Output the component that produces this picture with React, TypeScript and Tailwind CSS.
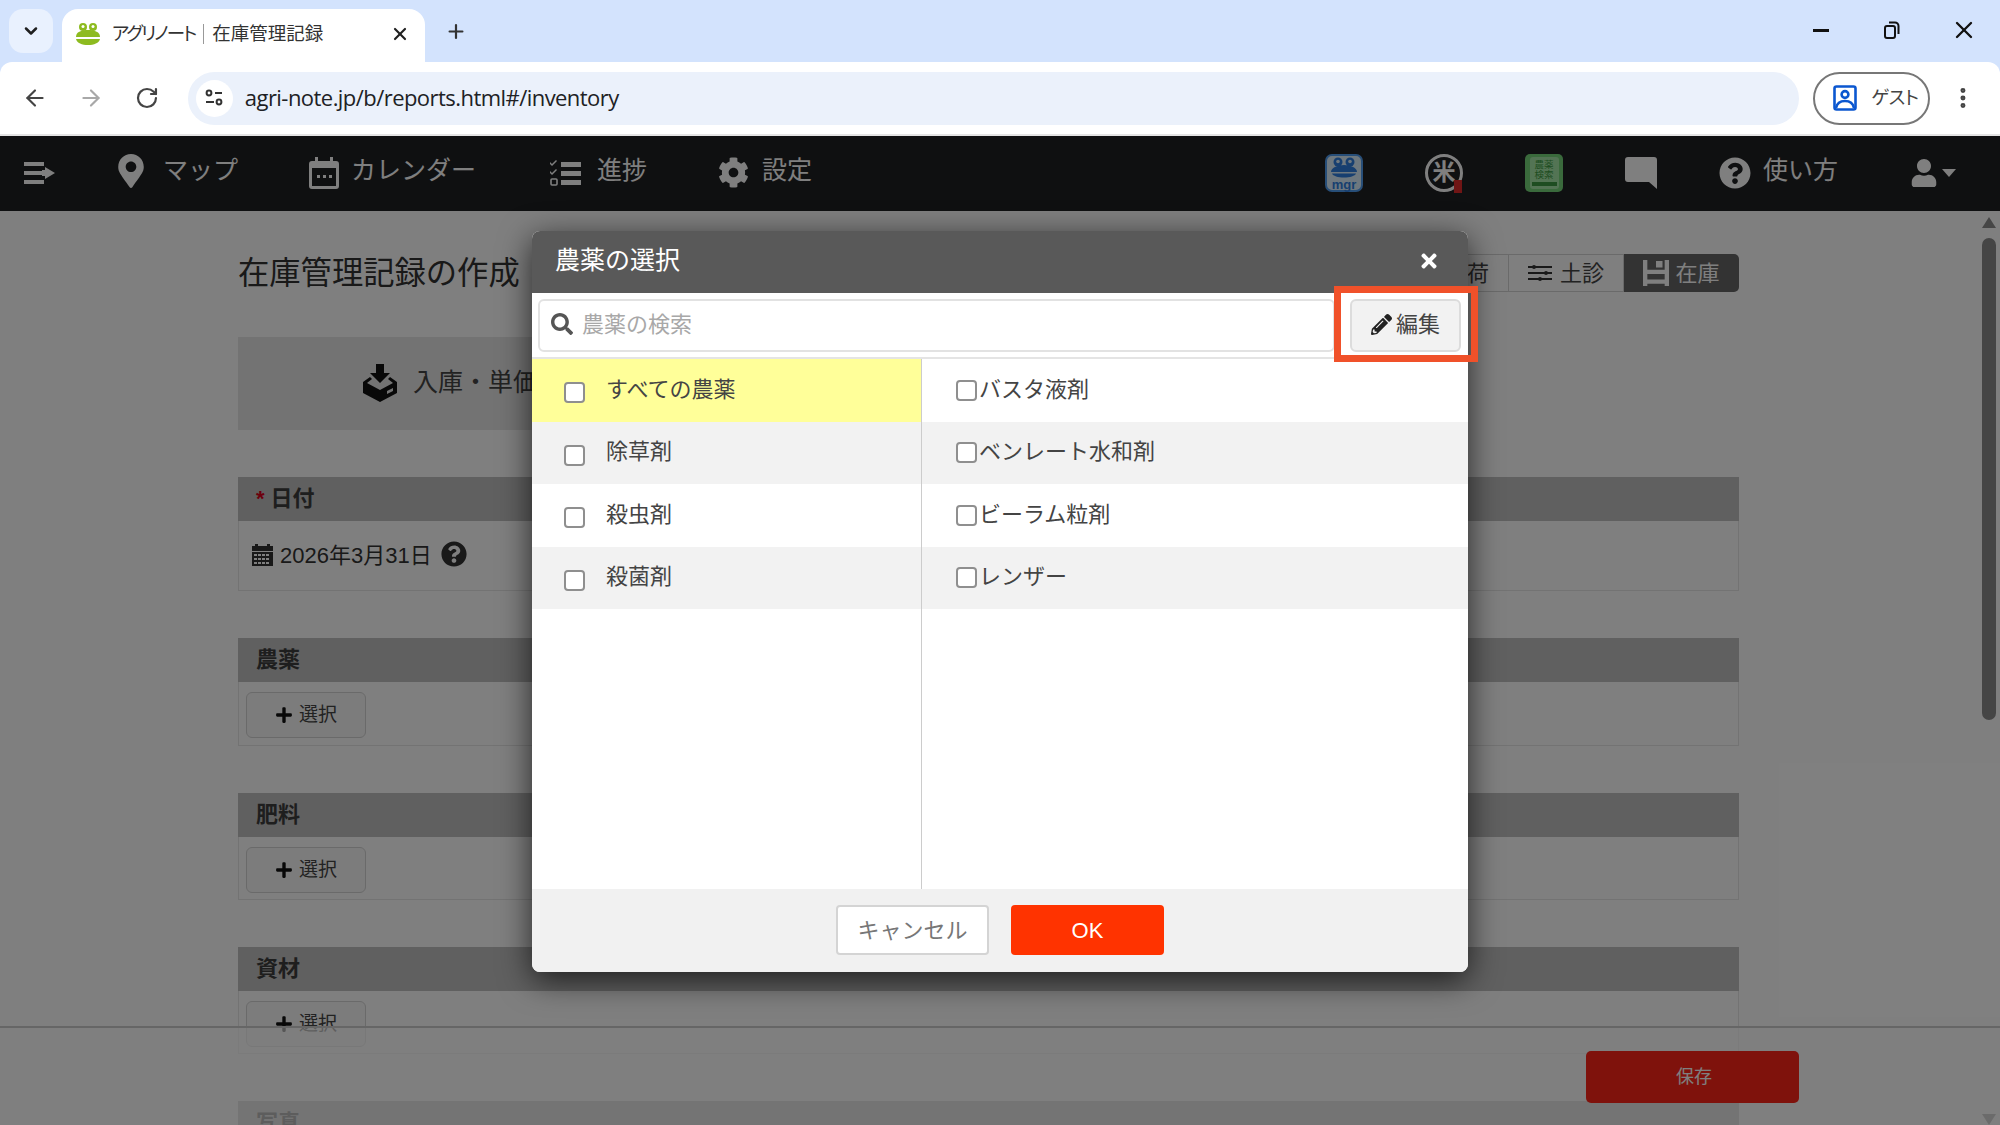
import { ArrowLeft, ArrowRight, ChevronDown, EllipsisVertical, Plus, RotateCw, X } from "lucide-react";
import { FaCog, FaMapMarkerAlt, FaPencilAlt, FaPlus, FaQuestionCircle, FaSearch, FaTimes, FaUser } from "react-icons/fa";

const leftRows = ["すべての農薬", "除草剤", "殺虫剤", "殺菌剤"];
const rightRows = ["バスタ液剤", "ベンレート水和剤", "ビーラム粒剤", "レンザー"];

function Frog({ className }: { className?: string }) {
  return (
    <svg viewBox="0 0 26 24" className={className}>
      <circle cx="8" cy="5" r="4" fill="#8dbb1f" />
      <circle cx="18" cy="5" r="4" fill="#8dbb1f" />
      <circle cx="8" cy="4.6" r="1.5" fill="#fff" />
      <circle cx="18" cy="4.6" r="1.5" fill="#fff" />
      <path d="M1 15C1 10 6 8 13 8s12 2 12 7H1z" fill="#8dbb1f" />
      <path d="M1 17h24c-1 4-6 6-12 6S2 21 1 17z" fill="#8dbb1f" />
    </svg>
  );
}

function BrowserChrome() {
  return (
    <div className="bg-[#d3e3fd]">
      <div className="flex h-[62px] items-end pl-[9px]">
        <div className="mb-[9px] flex h-[44px] w-[44px] items-center justify-center rounded-[14px] bg-[#e9f1fe]">
          <ChevronDown size={20} strokeWidth={3} className="text-[#1f1f1f]" />
        </div>
        <div className="ml-[9px] flex h-[53px] w-[363px] items-center rounded-t-[16px] bg-white pb-[4px] pl-[13px] pr-[15px]">
          <Frog className="h-[24px] w-[26px]" />
          <span className="ml-[11px] flex flex-1 items-center text-[18.5px] text-[#333]">
            <span className="tracking-[-2px] [font-feature-settings:'palt']">アグリノート</span>
            <span className="ml-[8px] mr-[8px] h-[20px] w-px bg-[#999]" />
            在庫管理記録
          </span>
          <X size={20} strokeWidth={2.6} className="text-[#1f1f1f]" />
        </div>
        <div className="mb-[9px] ml-[20px] flex h-[44px] w-[22px] items-center justify-center">
          <Plus size={23} strokeWidth={2.4} className="text-[#333]" />
        </div>
        <div className="mb-[9px] flex h-[44px] flex-1 -translate-y-[1px] items-center justify-end pr-[22px]">
          <div className="h-[3px] w-[16px] bg-[#111]" />
          <svg viewBox="0 0 20 20" className="ml-[53px] h-[20px] w-[20px] fill-none stroke-[#111] stroke-2">
            <rect x="3" y="6" width="10" height="12" rx="2" />
            <path d="M7 2.5h6a3.5 3.5 0 0 1 3.5 3.5v8" />
          </svg>
          <X size={28} strokeWidth={2} className="ml-[48px] text-[#111]" />
        </div>
      </div>
      <div className="flex h-[74px] items-center rounded-t-[12px] border-b-2 border-[#e4e4e4] bg-white pl-[22px] pr-[24px]">
        <ArrowLeft size={26} strokeWidth={2} className="text-[#444]" />
        <ArrowRight size={26} strokeWidth={2} className="ml-[30px] text-[#a8a8a8]" />
        <RotateCw size={24} strokeWidth={2.2} className="ml-[31px] text-[#444]" />
        <div className="ml-[29px] flex h-[53px] w-[1614px] items-center rounded-full bg-[#ebf1fb] pl-[8px]">
          <div className="flex h-[37px] w-[37px] items-center justify-center rounded-full bg-white">
            <svg viewBox="0 0 20 20" className="h-[20px] w-[20px] fill-none stroke-[#333] stroke-2">
              <circle cx="5" cy="5" r="2.4" />
              <path d="M11 5h7M2 14h8" />
              <circle cx="15" cy="14" r="2.4" />
            </svg>
          </div>
          <span className="ml-[12px] -translate-y-[1px] text-[22px] text-[#202124] [font-family:'Open_Sans',sans-serif] tracking-[-0.55px]">agri-note.jp/b/reports.html#/inventory</span>
        </div>
        <div className="ml-[14px] flex h-[53px] w-[117px] items-center rounded-full border-2 border-[#777] pl-[18px]">
          <svg viewBox="0 0 24 26" className="h-[26px] w-[24px] fill-none stroke-[#0b57d0] stroke-[2.6]">
            <rect x="1.5" y="1.5" width="21" height="23" rx="2" />
            <circle cx="12" cy="9.5" r="3.4" />
            <path d="M3 23c1-5 4-7 9-7s8 2 9 7" />
          </svg>
          <span className="ml-[14px] text-[18.5px] tracking-[-0.5px] text-[#444] [font-feature-settings:'palt']">ゲスト</span>
        </div>
        <EllipsisVertical size={26} strokeWidth={2.6} className="ml-[20px] text-[#444]" />
      </div>
    </div>
  );
}

function NavBar() {
  return (
    <div className="flex h-[75px] items-center bg-[#1f2022] pb-[2px] text-[25px] leading-none text-white">
      <svg viewBox="0 0 32 24" className="ml-[24px] h-[24px] w-[32px] fill-white">
        <path d="M0 1h20v4H0zM0 10h20v4H0zM0 19h20v4H0zM21 6l10 6-10 6v-3h-3V9h3z" />
      </svg>
      <FaMapMarkerAlt size={34} className="ml-[58px] -translate-y-[2px]" />
      <span className="ml-[15px] -translate-y-[2px]">マップ</span>
      <svg viewBox="0 0 30 32" className="ml-[71px] h-[32px] w-[30px] fill-white">
        <path d="M6 0h3v4h12V0h3v4h3a3 3 0 0 1 3 3v22a3 3 0 0 1-3 3H3a3 3 0 0 1-3-3V7a3 3 0 0 1 3-3h3zM3 11v18h24V11z" />
        <path d="M8 18h3v3H8zM14 18h3v3h-3zM20 18h3v3h-3z" />
      </svg>
      <span className="ml-[12px] -translate-y-[2px]">カレンダー</span>
      <svg viewBox="0 0 31 28" className="ml-[74px] h-[28px] w-[31px] fill-white">
        <path d="M11 3h20v5H11zM11 12h20v5H11zM11 21h20v5H11z" />
        <path d="M0 3l2 2 4-4 1 1-5 5-3-3z" />
        <path d="M0 12l2 2 4-4 1 1-5 5-3-3z" />
        <rect x="1" y="20" width="6" height="6" rx="1" fill="none" stroke="#fff" strokeWidth="1.6" />
      </svg>
      <span className="ml-[16px] -translate-y-[2px]">進捗</span>
      <FaCog size={31} className="ml-[71px]" />
      <span className="ml-[13px] -translate-y-[2px]">設定</span>
      <svg viewBox="0 0 38 38" className="ml-[513px] h-[38px] w-[38px]">
        <rect x="1" y="1" width="36" height="36" rx="6" fill="#dcf0ff" stroke="#4f9cf0" strokeWidth="2" />
        <circle cx="13" cy="8" r="4.5" fill="#2f7fe0" />
        <circle cx="25" cy="8" r="4.5" fill="#2f7fe0" />
        <circle cx="13" cy="7.5" r="1.8" fill="#dcf0ff" />
        <circle cx="25" cy="7.5" r="1.8" fill="#dcf0ff" />
        <path d="M6 18c0-4 6-7 13-7s13 3 13 7H6z" fill="#2f7fe0" />
        <path d="M7 19.5h24c-1 2.500-6 4-12 4S8 22 7 19.5z" fill="#2f7fe0" />
        <text x="19" y="35" textAnchor="middle" fontSize="13" fontWeight="700" fill="#2f7fe0" fontFamily="Liberation Sans">mgr</text>
      </svg>
      <div className="relative ml-[62px] flex h-[38px] w-[38px] items-center justify-center rounded-full border-[3px] border-white text-[23px] font-bold leading-none">
        米
        <span className="absolute -bottom-[4px] -right-[2px] h-[13px] w-[8px] bg-[#e02b2b]" />
      </div>
      <svg viewBox="0 0 38 38" className="ml-[62px] h-[38px] w-[38px]">
        <rect x="0" y="0" width="38" height="38" rx="5" fill="#74d478" />
        <rect x="5" y="3" width="29" height="32" rx="3" fill="#a6e8a8" />
        <text x="19" y="14" textAnchor="middle" fontSize="9.5" fill="#3d9a42" fontFamily="Noto Sans CJK JP">農薬</text>
        <text x="19" y="24" textAnchor="middle" fontSize="9.5" fill="#3d9a42" fontFamily="Noto Sans CJK JP">検索</text>
        <rect x="7" y="28" width="25" height="4" fill="#3d9a42" />
      </svg>
      <svg viewBox="0 0 32 32" className="ml-[62px] h-[32px] w-[32px] fill-white">
        <path d="M3 0h26a3 3 0 0 1 3 3v29l-8-7H3a3 3 0 0 1-3-3V3a3 3 0 0 1 3-3z" />
      </svg>
      <FaQuestionCircle size={32} className="ml-[62px]" />
      <span className="ml-[12px] -translate-y-[2px]">使い方</span>
      <FaUser size={28} className="ml-[72px]" />
      <svg viewBox="0 0 14 8" className="ml-[4px] h-[8px] w-[14px] fill-white">
        <path d="M0 0h14L7 8z" />
      </svg>
    </div>
  );
}

function SelectButton() {
  return (
    <div className="pl-[7px] pt-[10px]">
      <button className="flex h-[46px] w-[120px] items-center justify-center rounded-[6px] border border-[#d4d4d4] bg-[#f8f8f8] text-[19px] text-[#444]">
        <FaPlus size={18} className="mr-[6px] text-[#111]" />
        選択
      </button>
    </div>
  );
}

function Section({ title, required, children, bodyH }: { title: string; required?: boolean; children?: React.ReactNode; bodyH: string }) {
  return (
    <section className="mt-[47px]">
      <div className="flex h-[44px] items-center bg-[#c0c0c0] pb-[2px] pl-[18px] text-[22px] font-bold text-[#3c3c3c]">
        {required && <span className="mr-[6px] text-[#d9001b]">*</span>}
        {title}
      </div>
      <div className={`border border-t-0 border-[#e6e6e6] ${bodyH}`}>{children}</div>
    </section>
  );
}

function PageBody() {
  return (
    <div className="relative flex h-[914px] overflow-hidden bg-white">
      <div className="ml-[238px] w-[1501px] pt-[43px]">
        <div className="flex h-[38px] items-center justify-between">
          <h1 className="pt-[2px] text-[31.3px] text-[#333]">在庫管理記録の作成</h1>
          <div className="flex h-[38px] text-[22px] text-[#444]">
            <div className="flex w-[120px] items-center justify-end border border-[#d4d4d4] pr-[19px]">出荷</div>
            <div className="flex w-[115px] items-center justify-center border-y border-r border-[#d4d4d4]">
              <svg viewBox="0 0 24 16" className="mr-[8px] h-[16px] w-[24px] fill-[#333]">
                <path d="M0 1h24v2H0zM0 7h24v2H0zM0 13h24v2H0z" />
                <circle cx="6" cy="2" r="2" />
                <circle cx="18" cy="8" r="2" />
                <circle cx="12" cy="14" r="2" />
              </svg>
              土診
            </div>
            <div className="flex w-[115px] items-center justify-center rounded-r-[5px] bg-[#666] text-white">
              <svg viewBox="0 0 24 24" className="mr-[6px] h-[26px] w-[26px] fill-white">
                <path d="M0 0h4v9h16V0h4v24h-4v-2H4v2H0zM4 13v5h16v-5zM12 1h6v6h-6z" />
              </svg>
              在庫
            </div>
          </div>
        </div>
        <div className="mt-[45px] flex h-[93px] w-[900px] items-center bg-[#e6e6e6] pb-[2px] pl-[125px] text-[25px] text-[#444]">
          <svg viewBox="0 0 34 38" className="h-[38px] w-[34px] fill-[#111]">
            <path d="M13 0h8v9h6l-10 10L7 9h6z" />
            <path d="M7 13l-7 5v11l17 9 17-9V18l-7-5-2 2 5 4-13 7-13-7 5-4zM24 27l6-3v3l-6 3z" />
          </svg>
          <span className="ml-[16px]">入庫・単価</span>
        </div>
        <Section title="日付" required bodyH="h-[70px]">
          <div className="flex h-[67px] items-center pl-[13px] text-[22px] text-[#333]">
            <svg viewBox="0 0 21 22" className="mr-[7px] h-[22px] w-[21px] fill-[#333]">
              <path d="M3 0h3v2h9V0h3v2h3v5H0V2h3z" />
              <path d="M0 8h21v14H0zM2 10v2h3v-2zM6 10v2h3v-2zM10 10v2h3v-2zM14 10v2h3v-2zM2 14v2h3v-2zM6 14v2h3v-2zM10 14v2h3v-2zM14 14v2h3v-2zM2 18v2h3v-2zM6 18v2h3v-2zM10 18v2h3v-2zM14 18v2h3v-2z" fillRule="evenodd" />
            </svg>
            <span className="mt-[2px]">2026年3月31日</span>
            <FaQuestionCircle size={26} className="ml-[9px] -translate-y-[1px]" />
          </div>
        </Section>
        <Section title="農薬" bodyH="h-[64px]">
          <SelectButton />
        </Section>
        <Section title="肥料" bodyH="h-[63px]">
          <SelectButton />
        </Section>
        <Section title="資材" bodyH="h-[63px]">
          <SelectButton />
        </Section>
        <Section title="写真" bodyH="h-[63px]" />
      </div>
      <div className="absolute right-[4px] top-[6px] flex h-[908px] w-[14px] flex-col items-center">
        <div className="h-0 w-0 border-x-[7px] border-b-[11px] border-x-transparent border-b-[#8c8c8c]" />
        <div className="mt-[10px] h-[482px] w-full rounded-full bg-[#8a8a8a]" />
        <div className="mt-auto h-0 w-0 border-x-[7px] border-t-[11px] border-x-transparent border-t-[#8c8c8c]" />
      </div>
      <div className="absolute inset-x-0 bottom-0 flex h-[99px] justify-end border-t-2 border-[#ccc] bg-white/65 pr-[201px] pt-[23px]">
        <button className="h-[52px] w-[213px] rounded-[5px] bg-[#fe2418] pl-[3px] text-[18px] text-white">保存</button>
      </div>
    </div>
  );
}

function Modal() {
  return (
    <div className="absolute left-[532px] top-[231px] flex h-[741px] w-[936px] flex-col rounded-[8px] bg-white shadow-[0_8px_32px_rgba(0,0,0,0.7)]">
      <div className="flex h-[62px] items-center justify-between rounded-t-[8px] bg-[#595959] pb-[3px] pl-[23px] pr-[28px]">
        <h2 className="text-[25px] text-white">農薬の選択</h2>
        <FaTimes size={22} className="text-white" />
      </div>
      <div className="flex h-[66px] items-center border-b-2 border-[#e4e4e4] pl-[6px] pr-[7px]">
        <div className="flex h-[53px] w-[797px] items-center rounded-[6px] border-2 border-[#e2e2e2] pb-[2px] pl-[11px]">
          <FaSearch size={22} className="text-[#555]" />
          <span className="ml-[9px] text-[22px] text-[#a8a8a8]">農薬の検索</span>
        </div>
        <button className="ml-auto flex h-[53px] w-[111px] items-center justify-center rounded-[6px] border-2 border-[#dcdcdc] bg-[#f2f2f2] pb-[2px] text-[22px] text-[#444]">
          <FaPencilAlt size={21} className="mr-[4px] text-[#222]" />
          編集
        </button>
      </div>
      <div className="flex flex-1">
        <div className="w-[390px] border-r border-[#ccc]">
          {leftRows.map((t, i) => (
            <div key={t} className={`flex h-[62.5px] items-center pl-[32px] text-[22px] text-[#444] ${i === 0 ? "bg-[#ffff99]" : i % 2 === 1 ? "bg-[#f2f2f2]" : ""}`}>
              <span className="mt-[5px] h-[21px] w-[21px] rounded-[4px] border-2 border-[#8f8f8f] bg-white" />
              <span className="ml-[21px] -translate-y-[1px]">{t}</span>
            </div>
          ))}
        </div>
        <div className="flex-1">
          {rightRows.map((t, i) => (
            <div key={t} className={`flex h-[62.5px] items-center pl-[34px] text-[22px] text-[#444] ${i % 2 === 1 ? "bg-[#f2f2f2]" : ""}`}>
              <span className="h-[21px] w-[21px] rounded-[4px] border-2 border-[#8f8f8f] bg-white" />
              <span className="ml-[2px] -translate-y-[1px]">{t}</span>
            </div>
          ))}
        </div>
      </div>
      <div className="flex h-[83px] items-start justify-center gap-[22px] rounded-b-[8px] bg-[#f1f1f1] pt-[16px]">
        <button className="h-[50px] w-[153px] rounded-[4px] border-2 border-[#d4d4d4] bg-white text-[22px] text-[#777]">キャンセル</button>
        <button className="h-[50px] w-[153px] rounded-[4px] bg-[#ff3300] text-[22px] text-white">OK</button>
      </div>
      <div className="absolute left-[802px] top-[55px] h-[76px] w-[144px] border-[7px] border-[#f0512a]" />
    </div>
  );
}

export default function App() {
  return (
    <div className="relative h-[1125px] w-[2000px] overflow-hidden [font-family:'Liberation_Sans','Noto_Sans_CJK_JP',sans-serif]">
      <BrowserChrome />
      <div className="relative">
        <NavBar />
        <PageBody />
        <div className="absolute inset-0 bg-black/50" />
      </div>
      <Modal />
    </div>
  );
}
